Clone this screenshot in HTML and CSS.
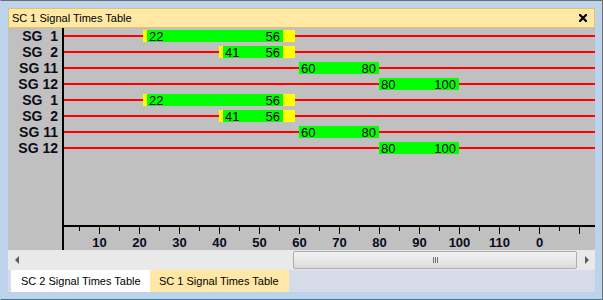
FILE: index.html
```html
<!DOCTYPE html>
<html lang="en">
<head>
<meta charset="UTF-8">
<title>SC 1 Signal Times Table</title>
<link rel="stylesheet" href="styles.css">
</head>
<body>
<div class="window">
  <div class="title-bar">
    <span class="title">SC 1 Signal Times Table</span>
    <svg class="close" width="8" height="8" viewBox="0 0 8 8"><path d="M1 1L7 7M7 1L1 7" stroke="#000" stroke-width="2.2" stroke-linecap="square"/></svg>
  </div>

  <div class="chart">
    <div class="labels">
      <div class="label">SG  1</div>
      <div class="label">SG  2</div>
      <div class="label">SG 11</div>
      <div class="label">SG 12</div>
      <div class="label">SG  1</div>
      <div class="label">SG  2</div>
      <div class="label">SG 11</div>
      <div class="label">SG 12</div>
    </div>
    <div class="axis"></div>
    <div class="plot">
      <div class="row">
        <span class="seg amber" style="left:79px;width:4px"></span>
        <span class="seg green" style="left:83px;width:136px"><b>22</b><b>56</b></span>
        <span class="seg amber" style="left:219px;width:12px"></span>
      </div>
      <div class="row">
        <span class="seg amber" style="left:155px;width:4px"></span>
        <span class="seg green" style="left:159px;width:60px"><b>41</b><b>56</b></span>
        <span class="seg amber" style="left:219px;width:12px"></span>
      </div>
      <div class="row">
        <span class="seg green" style="left:235px;width:80px"><b>60</b><b>80</b></span>
      </div>
      <div class="row">
        <span class="seg green" style="left:315px;width:80px"><b>80</b><b>100</b></span>
      </div>
      <div class="row">
        <span class="seg amber" style="left:79px;width:4px"></span>
        <span class="seg green" style="left:83px;width:136px"><b>22</b><b>56</b></span>
        <span class="seg amber" style="left:219px;width:12px"></span>
      </div>
      <div class="row">
        <span class="seg amber" style="left:155px;width:4px"></span>
        <span class="seg green" style="left:159px;width:60px"><b>41</b><b>56</b></span>
        <span class="seg amber" style="left:219px;width:12px"></span>
      </div>
      <div class="row">
        <span class="seg green" style="left:235px;width:80px"><b>60</b><b>80</b></span>
      </div>
      <div class="row">
        <span class="seg green" style="left:315px;width:80px"><b>80</b><b>100</b></span>
      </div>

      <svg class="ruler" width="531" height="25" viewBox="0 0 531 25">
        <rect x="0" y="0" width="531" height="2" fill="#000"/>
        <g fill="#000">
          <rect x="15" y="2" width="1" height="4"/><rect x="35" y="2" width="1" height="7"/>
          <rect x="55" y="2" width="1" height="4"/><rect x="75" y="2" width="1" height="7"/>
          <rect x="95" y="2" width="1" height="4"/><rect x="115" y="2" width="1" height="7"/>
          <rect x="135" y="2" width="1" height="4"/><rect x="155" y="2" width="1" height="7"/>
          <rect x="175" y="2" width="1" height="4"/><rect x="195" y="2" width="1" height="7"/>
          <rect x="215" y="2" width="1" height="4"/><rect x="235" y="2" width="1" height="7"/>
          <rect x="255" y="2" width="1" height="4"/><rect x="275" y="2" width="1" height="7"/>
          <rect x="295" y="2" width="1" height="4"/><rect x="315" y="2" width="1" height="7"/>
          <rect x="335" y="2" width="1" height="4"/><rect x="355" y="2" width="1" height="7"/>
          <rect x="375" y="2" width="1" height="4"/><rect x="395" y="2" width="1" height="7"/>
          <rect x="415" y="2" width="1" height="4"/><rect x="435" y="2" width="1" height="7"/>
          <rect x="455" y="2" width="1" height="4"/><rect x="475" y="2" width="1" height="7"/>
          <rect x="495" y="2" width="1" height="4"/><rect x="515" y="2" width="1" height="7"/>
        </g>
        <g class="ticks" text-anchor="middle">
          <text x="35.5" y="22">10</text>
          <text x="75.5" y="22">20</text>
          <text x="115.5" y="22">30</text>
          <text x="155.5" y="22">40</text>
          <text x="195.5" y="22">50</text>
          <text x="235.5" y="22">60</text>
          <text x="275.5" y="22">70</text>
          <text x="315.5" y="22">80</text>
          <text x="355.5" y="22">90</text>
          <text x="395.5" y="22">100</text>
          <text x="435.5" y="22">110</text>
          <text x="475.5" y="22">0</text>
        </g>
      </svg>
    </div>
  </div>

  <div class="scrollbar">
    <div class="sb-btn"><span class="arrow-left"></span></div>
    <div class="sb-track">
      <div class="thumb"><span class="grip"></span><span class="grip"></span><span class="grip"></span></div>
    </div>
    <div class="sb-btn"><span class="arrow-right"></span></div>
  </div>

  <div class="tabs">
    <div class="tab">SC 2 Signal Times Table</div>
    <div class="tab active">SC 1 Signal Times Table</div>
  </div>
</div>
</body>
</html>
```

FILE: styles.css
```css
body { margin: 0; background: #b9d1ea; font-family: 'Liberation Sans', Arial, sans-serif; }
.window { width: 603px; height: 300px; box-sizing: border-box; background: #bcd3eb; border-top: 1px solid #6e6e6e; border-right: 1px solid #6e6e6e; border-bottom: 1px solid #3d7a8c; border-left: 1px solid #bcd3eb; padding: 7px 7px 7px 7px; display: flex; flex-direction: column; }

.title-bar { height: 20px; box-sizing: border-box; background: #ffe8a6; border: 1px solid #e5c365; display: flex; align-items: center; justify-content: space-between; padding: 0 7px 0 3px; }
.title { font-size: 11px; color: #000; line-height: 18px; }
.close { display: block; }

.chart { height: 222px; background: #c0c0c0; display: flex; }
.labels { width: 54px; box-sizing: border-box; padding-right: 4px; }
.label { height: 16px; line-height: 16px; text-align: right; font-size: 14px; font-weight: bold; color: #0c0c18; white-space: pre; }
.axis { width: 2px; background: #000; }
.plot { flex: 1; display: flex; flex-direction: column; overflow: hidden; }
.row { height: 16px; position: relative; }
.row::before { content: ''; position: absolute; left: 0; right: 0; top: 7px; height: 2px; background: #ff0000; }
.seg { position: absolute; top: 2px; height: 12px; }
.seg.amber { background: #ffff00; }
.seg.green { background: #00ff00; display: flex; justify-content: space-between; box-sizing: border-box; padding: 0 3px 0 2px; }
.seg b { font-weight: normal; font-size: 13px; line-height: 13px; color: #000; }
.ruler { display: block; margin-top: auto; }
.ticks text { font-family: 'Liberation Sans', Arial, sans-serif; font-weight: bold; font-size: 13px; fill: #0a0a1e; }

.scrollbar { height: 20px; background: #e9e9e9; display: flex; }
.sb-btn { width: 17px; display: flex; align-items: center; justify-content: center; }
.arrow-left { width: 0; height: 0; border-top: 4px solid transparent; border-bottom: 4px solid transparent; border-right: 4px solid #5a5a5a; }
.arrow-right { width: 0; height: 0; border-top: 4px solid transparent; border-bottom: 4px solid transparent; border-left: 4px solid #5a5a5a; }
.sb-track { flex: 1; padding: 1px 1px 1px 268px; }
.thumb { width: 284px; height: 18px; box-sizing: border-box; border: 1px solid #acacac; border-radius: 2px; background: linear-gradient(#f3f3f3, #e8e8e8 50%, #dadada); display: flex; align-items: center; justify-content: center; gap: 1px; }
.grip { width: 1px; height: 6px; background: #707070; }

.tabs { height: 22px; background: #d6dbe9; display: flex; padding-left: 3px; }
.tab { width: 139px; box-sizing: border-box; padding-left: 10px; font-size: 11px; line-height: 22px; color: #000; background: #fff; white-space: nowrap; }
.tab.active { background: #ffe8a6; padding-left: 9px; }
```
